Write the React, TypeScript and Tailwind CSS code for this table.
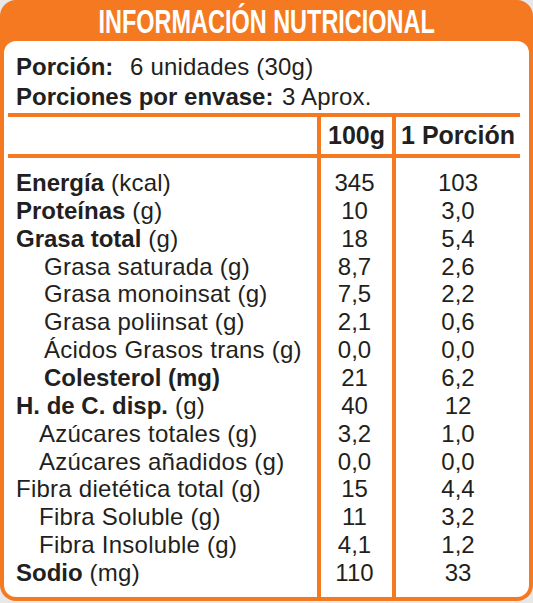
const rows: { b: string; r: string; lvl: 0 | 1 | 2; v1: string; v2: string }[] = [
  { b: "Energía", r: " (kcal)", lvl: 0, v1: "345", v2: "103" },
  { b: "Proteínas", r: " (g)", lvl: 0, v1: "10", v2: "3,0" },
  { b: "Grasa total", r: " (g)", lvl: 0, v1: "18", v2: "5,4" },
  { b: "", r: "Grasa saturada (g)", lvl: 2, v1: "8,7", v2: "2,6" },
  { b: "", r: "Grasa monoinsat (g)", lvl: 2, v1: "7,5", v2: "2,2" },
  { b: "", r: "Grasa poliinsat (g)", lvl: 2, v1: "2,1", v2: "0,6" },
  { b: "", r: "Ácidos Grasos trans (g)", lvl: 2, v1: "0,0", v2: "0,0" },
  { b: "Colesterol (mg)", r: "", lvl: 2, v1: "21", v2: "6,2" },
  { b: "H. de C. disp.", r: " (g)", lvl: 0, v1: "40", v2: "12" },
  { b: "", r: "Azúcares totales (g)", lvl: 1, v1: "3,2", v2: "1,0" },
  { b: "", r: "Azúcares añadidos (g)", lvl: 1, v1: "0,0", v2: "0,0" },
  { b: "", r: "Fibra dietética total (g)", lvl: 0, v1: "15", v2: "4,4" },
  { b: "", r: "Fibra Soluble (g)", lvl: 1, v1: "11", v2: "3,2" },
  { b: "", r: "Fibra Insoluble (g)", lvl: 1, v1: "4,1", v2: "1,2" },
  { b: "Sodio", r: " (mg)", lvl: 0, v1: "110", v2: "33" },
];

const indent = { 0: "pl-[8px]", 1: "pl-[31px]", 2: "pl-[36px]" };

export default function App() {
  return (
    <div className="w-[533px] h-[603px] bg-[#e8e8e8] font-['Liberation_Sans',Arial,sans-serif] text-[#231f20]">
      <div className="h-[601px] flex flex-col rounded-t-[16px] rounded-b-[16px] bg-[#f47920] px-[4px] pb-[4px]">
        <div className="h-[41px] shrink-0 flex items-center justify-center">
          <h1 className="text-white font-bold text-[34px] leading-none whitespace-nowrap scale-x-[0.69] font-['Liberation_Sans',Arial,sans-serif]">
            INFORMACIÓN NUTRICIONAL
          </h1>
        </div>
        <div className="flex-1 flex flex-col bg-white rounded-[12px] overflow-hidden">
          <div className="pt-[11px] pl-[12px] text-[24px]">
            <div className="h-[30px] leading-[30px] flex">
              <span className="font-bold w-[114px]">Porción:</span>
              <span className="tracking-[0.2px]">6 unidades (30g)</span>
            </div>
            <div className="h-[30px] leading-[30px] flex">
              <span className="font-bold w-[266px]">Porciones por envase:</span>
              <span className="tracking-[0.2px]">3 Aprox.</span>
            </div>
          </div>
          <div className="ml-[4px] w-[512px] flex-1 flex flex-col mt-[1px]">
            <div className="h-[4px] bg-[#f47920]" />
            <div className="h-[37px] grid grid-cols-[309px_75px_128px] font-bold text-[25px] leading-[37px]">
              <div />
              <div className="border-l-[4px] border-[#f47920] text-center">100g</div>
              <div className="border-l-[4px] border-[#f47920] text-center">1 Porción</div>
            </div>
            <div className="h-[4px] bg-[#f47920]" />
            <div className="flex-1 grid grid-cols-[309px_75px_128px] text-[24px] leading-[27.86px]">
              <div className="pt-[11px]">
                {rows.map((row, i) => (
                  <div key={i} className={`${indent[row.lvl]} whitespace-nowrap`}>
                    {row.b && <span className="font-bold">{row.b}</span>}
                    <span className="tracking-[0.25px]">{row.r}</span>
                  </div>
                ))}
              </div>
              <div className="pt-[11px] border-l-[4px] border-[#f47920] text-center pr-[4px]">
                {rows.map((row, i) => (
                  <div key={i}>{row.v1}</div>
                ))}
              </div>
              <div className="pt-[11px] border-l-[4px] border-[#f47920] text-center">
                {rows.map((row, i) => (
                  <div key={i}>{row.v2}</div>
                ))}
              </div>
            </div>
          </div>
        </div>
      </div>
    </div>
  );
}
